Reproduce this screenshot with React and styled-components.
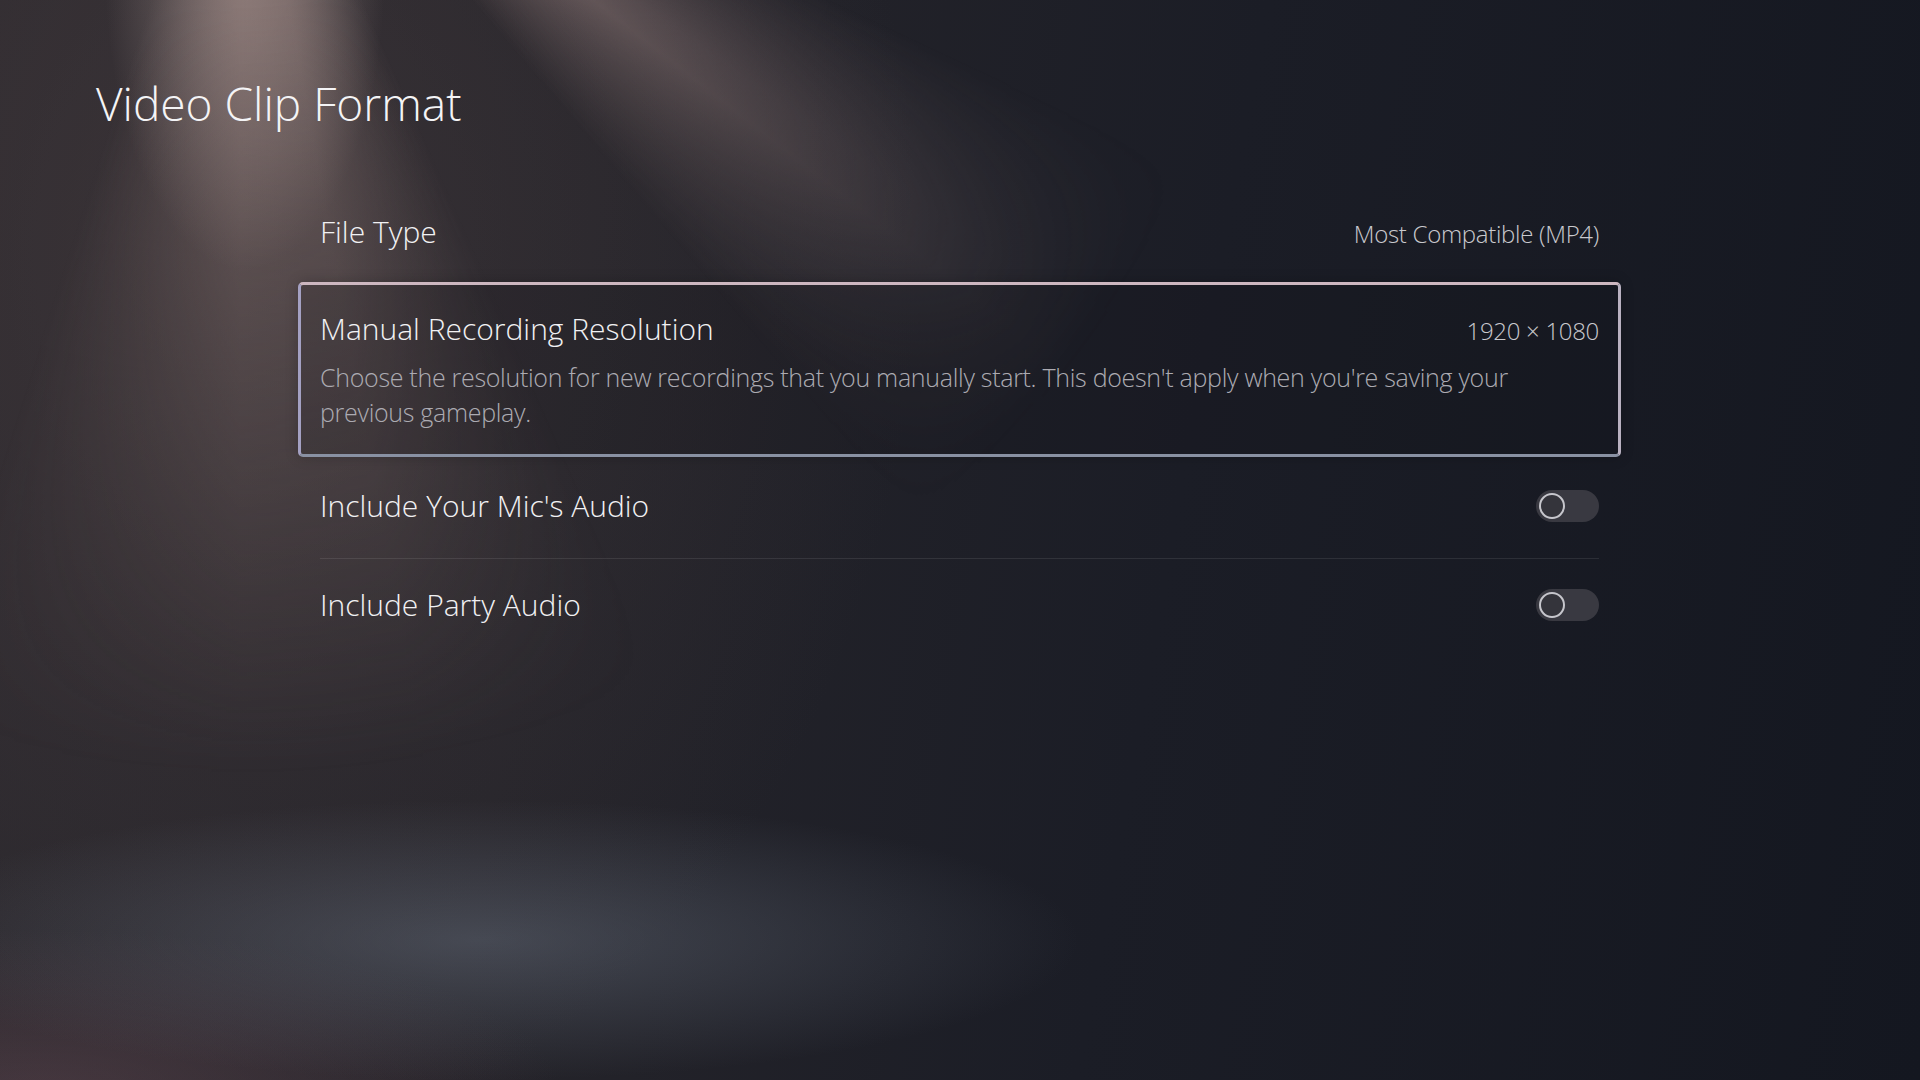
import React from "react";
import styled, { createGlobalStyle } from "styled-components";

const settings = [
    { id: "fileType", label: "File Type", value: "Most Compatible (MP4)" },
    {
        id: "resolution",
        label: "Manual Recording Resolution",
        value: "1920 × 1080",
        description:
            "Choose the resolution for new recordings that you manually start. This doesn't apply when you're saving your previous gameplay.",
        selected: true,
    },
    { id: "mic", label: "Include Your Mic's Audio", toggle: false },
    { id: "party", label: "Include Party Audio", toggle: false, divider: true },
];

export default function App() {
    return (
        <>
            <GlobalStyle />
            <Page>
                <Title>Video Clip Format</Title>
                <List>
                    {settings.map((item) => (
                        <Row key={item.id} $selected={item.selected}>
                            <RowBody $divider={item.divider} $selected={item.selected}>
                                <RowHead>
                                    <Label>{item.label}</Label>
                                    {item.value && <Value>{item.value}</Value>}
                                    {item.toggle !== undefined && (
                                        <Toggle $on={item.toggle}>
                                            <Knob />
                                        </Toggle>
                                    )}
                                </RowHead>
                                {item.description && <Description>{item.description}</Description>}
                            </RowBody>
                        </Row>
                    ))}
                </List>
            </Page>
        </>
    );
}
// ::::::::::Styled-Components::::::::::
const GlobalStyle = createGlobalStyle`
    * {
        box-sizing: border-box;
    }
    html, body {
        margin: 0;
        padding: 0;
        background: #171922;
    }
    body {
        font-family: "Open Sans", "Noto Sans", sans-serif;
        -webkit-font-smoothing: antialiased;
    }
`;
const Page = styled.div`
    position: relative;
    isolation: isolate;
    width: 1920px;
    height: 1080px;
    overflow: hidden;
    padding: 76px 0 0 96px;
    color: #f1f1f3;
    background:
        radial-gradient(ellipse 600px 140px at 480px 940px, rgba(112, 122, 138, 0.42), rgba(112, 122, 138, 0) 100%),
        radial-gradient(ellipse 520px 160px at 40px 1090px, rgba(96, 70, 80, 0.5), rgba(96, 70, 80, 0) 100%),
        radial-gradient(ellipse 140px 300px at 245px -30px, rgba(195, 175, 170, 0.55), rgba(195, 175, 170, 0) 100%),
        radial-gradient(ellipse 700px 900px at 220px 250px, rgba(76, 64, 66, 0.45), rgba(76, 64, 66, 0) 100%),
        linear-gradient(100deg, #2c292e 0%, #25242a 30%, #1b1d26 60%, #141720 100%);

    /* light rays falling from the top left */
    &::before {
        content: "";
        position: absolute;
        inset: 0;
        z-index: -1;
        pointer-events: none;
        background: conic-gradient(from 0deg at 240px -276px,
            rgba(0, 0, 0, 0) 115deg,
            rgba(150, 128, 128, 0.55) 125deg,
            rgba(160, 136, 134, 0.6) 128deg,
            rgba(0, 0, 0, 0) 140deg,
            rgba(0, 0, 0, 0) 156deg,
            rgba(150, 128, 124, 0.5) 170deg,
            rgba(150, 128, 124, 0.55) 180deg,
            rgba(0, 0, 0, 0) 198deg);
        -webkit-mask-image: radial-gradient(circle at 240px -276px, #000 280px, rgba(0, 0, 0, 0.5) 650px, transparent 1050px);
        mask-image: radial-gradient(circle at 240px -276px, #000 280px, rgba(0, 0, 0, 0.5) 650px, transparent 1050px);
    }
`;
const Title = styled.h1`
    margin: 0;
    font-size: 46px;
    font-weight: 300;
    line-height: 55px;
    color: #f4f4f6;
`;
const List = styled.div`
    width: 1323px;
    margin: 53px 0 0 202px;
    display: flex;
    flex-direction: column;
`;
const Row = styled.div`
    border: 3px solid transparent;
    border-radius: 5px;
    padding: ${(p) => (p.$selected ? "24px 19px 24px" : "0 19px")};
    ${(p) =>
        p.$selected &&
        `
        border-color: #cdb7c0 #b9b1c1 #8991a3 #a4a1c3;
        background: rgba(12, 12, 20, 0.14);
        box-shadow: 0 0 14px rgba(0, 0, 0, 0.2);
    `}
`;
const RowBody = styled.div`
    display: flex;
    flex-direction: column;
    justify-content: center;
    min-height: ${(p) => (p.$selected ? "auto" : "92px")};
    border-top: ${(p) => (p.$divider ? "1px solid rgba(255, 255, 255, 0.09)" : "none")};
`;
const RowHead = styled.div`
    display: flex;
    align-items: baseline;
    justify-content: space-between;
`;
const Label = styled.span`
    font-size: 30px;
    font-weight: 300;
    line-height: 40px;
    color: #f1f1f3;
`;
const Value = styled.span`
    font-size: 24px;
    font-weight: 300;
    line-height: 40px;
    letter-spacing: -0.3px;
    color: #c9c9ce;
`;
const Description = styled.p`
    margin: 9px 0 0;
    font-size: 25px;
    font-weight: 300;
    line-height: 35px;
    letter-spacing: -0.3px;
    color: #acabb2;
`;
const Toggle = styled.div`
    width: 63px;
    height: 32px;
    border-radius: 16px;
    padding: 0 3px;
    align-self: center;
    display: flex;
    align-items: center;
    justify-content: ${(p) => (p.$on ? "flex-end" : "flex-start")};
    background: #393941;
`;
const Knob = styled.div`
    width: 26px;
    height: 26px;
    border-radius: 50%;
    border: 2px solid #c6c6cc;
    background: #34343b;
`;
